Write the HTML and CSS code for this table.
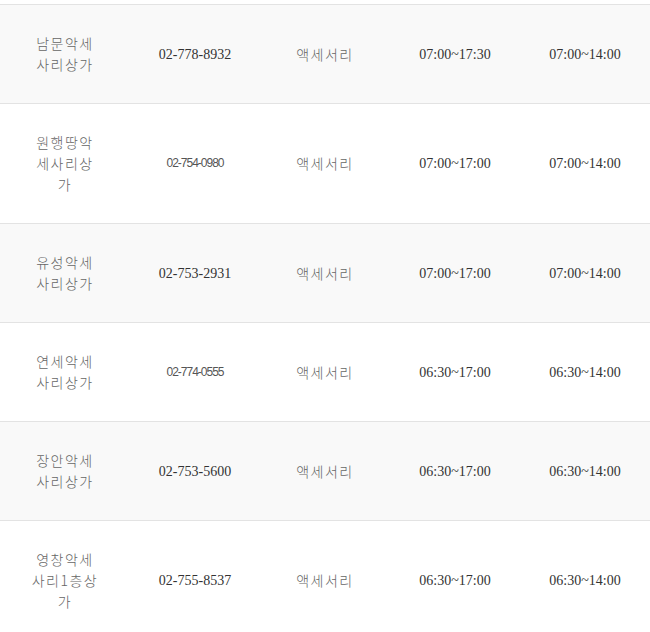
FILE: index.html
```html
<!DOCTYPE html>
<html lang="ko">
<head>
<meta charset="utf-8">
<link rel="stylesheet" href="styles.css">
</head>
<body>
<table class="shops">
  <tbody>
    <tr>
      <td class="name">남문악세사리상가</td>
      <td class="num">02-778-8932</td>
      <td class="kind">액세서리</td>
      <td class="num">07:00~17:30</td>
      <td class="num">07:00~14:00</td>
    </tr>
    <tr>
      <td class="name">원행땅악세사리상가</td>
      <td class="num small">02-754-0980</td>
      <td class="kind">액세서리</td>
      <td class="num">07:00~17:00</td>
      <td class="num">07:00~14:00</td>
    </tr>
    <tr>
      <td class="name">유성악세사리상가</td>
      <td class="num">02-753-2931</td>
      <td class="kind">액세서리</td>
      <td class="num">07:00~17:00</td>
      <td class="num">07:00~14:00</td>
    </tr>
    <tr>
      <td class="name">연세악세사리상가</td>
      <td class="num small">02-774-0555</td>
      <td class="kind">액세서리</td>
      <td class="num">06:30~17:00</td>
      <td class="num">06:30~14:00</td>
    </tr>
    <tr>
      <td class="name">장안악세사리상가</td>
      <td class="num">02-753-5600</td>
      <td class="kind">액세서리</td>
      <td class="num">06:30~17:00</td>
      <td class="num">06:30~14:00</td>
    </tr>
    <tr>
      <td class="name">영창악세사리1층상가</td>
      <td class="num">02-755-8537</td>
      <td class="kind">액세서리</td>
      <td class="num">06:30~17:00</td>
      <td class="num">06:30~14:00</td>
    </tr>
  </tbody>
</table>
</body>
</html>
```

FILE: styles.css
```css
html, body {
  margin: 0;
  padding: 0;
  background: #ffffff;
}

.shops {
  width: 650px;
  margin-top: 4px;
  border-collapse: collapse;
  table-layout: fixed;
  border-top: 1px solid #e3e3e3;
}

.shops td {
  width: 130px;
  padding: 28px 30px;
  border-bottom: 1px solid #e3e3e3;
  text-align: center;
  vertical-align: middle;
  line-height: 21px;
  box-sizing: border-box;
}

.shops tr:nth-child(odd) td {
  background: #f9f9f9;
}

.name,
.kind {
  font-family: "Noto Sans CJK KR", sans-serif;
  font-weight: 300;
  font-size: 14px;
  letter-spacing: 1.5px;
  color: #666666;
}

.shops td.num {
  font-family: "Liberation Serif", serif;
  font-size: 14px;
  color: #333333;
  white-space: nowrap;
  padding-left: 0;
  padding-right: 0;
}

.shops td.small {
  font-family: "Liberation Sans", sans-serif;
  font-size: 12px;
  letter-spacing: -1px;
  color: #555555;
}
```
